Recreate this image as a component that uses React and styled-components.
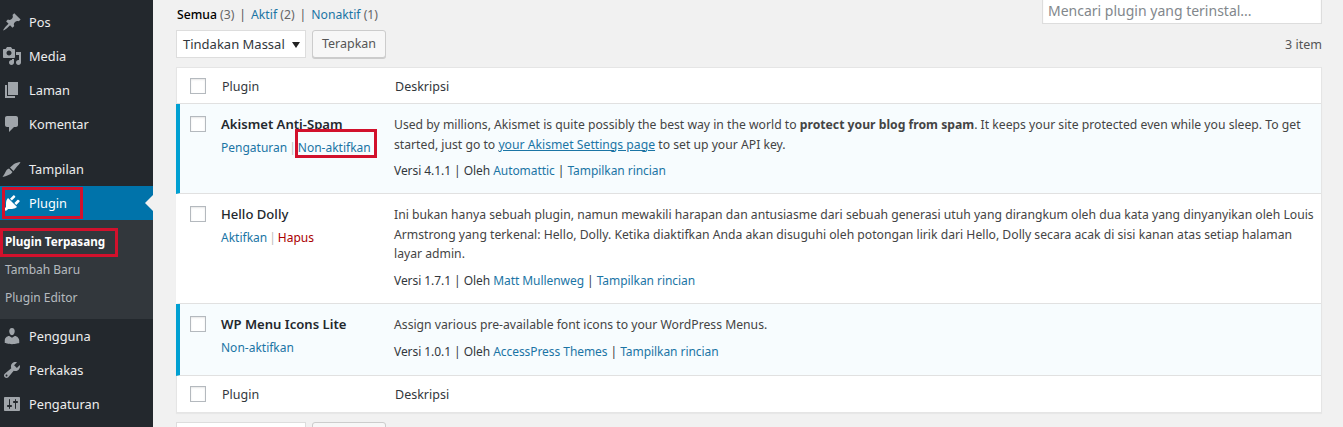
import styled, { createGlobalStyle } from "styled-components";

const icons = {
  pos: "M10.44 3.02l1.82-1.82 6.36 6.35-1.83 1.82c-1.05-.68-2.48-.57-3.41.36l-.75.75c-.92.93-1.04 2.35-.35 3.41l-1.83 1.82-2.41-2.41-2.8 2.79c-.42.42-3.38 2.71-3.8 2.29s1.86-3.39 2.28-3.81l2.79-2.79L4.1 9.36l1.83-1.82c1.05.69 2.48.57 3.4-.36l.75-.75c.93-.92 1.05-2.35.36-3.41z",
  media:
    "M13 11V4c0-.55-.45-1-1-1h-1.67L9 1H5L3.67 3H2c-.55 0-1 .45-1 1v7c0 .55.45 1 1 1h10c.55 0 1-.45 1-1zM7 4.5c1.38 0 2.5 1.12 2.5 2.5S8.38 9.5 7 9.5 4.5 8.38 4.5 7 5.62 4.5 7 4.5zM14 6h5v10.5c0 1.38-1.12 2.5-2.5 2.5S14 17.88 14 16.5s1.12-2.5 2.5-2.5c.17 0 .34.02.5.05V9h-3V6zm-4 8.05V13h2v3.5c0 1.38-1.12 2.5-2.5 2.5S7 17.88 7 16.5 8.12 14 9.5 14c.17 0 .34.02.5.05z",
  laman: "M6 15V2h10v13H6zm-1 1h8v2H3V5h2v11z",
  komentar:
    "M5 2h9c1.1 0 2 .9 2 2v7c0 1.1-.9 2-2 2h-2l-5 5v-5H5c-1.1 0-2-.9-2-2V4c0-1.1.9-2 2-2z",
  tampilan:
    "M.5 18C2 16 3 14 4 12c.5-1.2 1.5-2 3-2.5l3.5 3.5c-1 1.5-2.5 2.5-4 3-2 1-4 1.5-6 2zM8 8.5L12 5c2-1 4-1.7 6.5-2-1 2-2.5 3.5-3.7 4.8L11.500 12z",
  plugin:
    "M13.11 4.36L9.87 7.6 8 5.73l3.24-3.24c.35-.34 1.05-.2 1.56.32.52.51.66 1.21.31 1.55zm-8 1.77l.91-1.12 9.01 9.01-1.19.84c-.71.71-2.63 1.16-3.82 1.16H6.14L4.9 17.26c-.59.59-1.54.59-2.12 0-.59-.58-.59-1.53 0-2.12l1.24-1.24v-3.88c0-1.13.4-3.19 1.09-3.89zm7.26 3.97l3.24-3.24c.34-.35 1.04-.21 1.55.31.52.51.66 1.21.32 1.56l-3.24 3.24z",
  pengguna:
    "M10 9.25c-2.27 0-2.73-3.44-2.73-3.44C7 4.02 7.82 2 9.97 2c2.16 0 2.98 2.02 2.71 3.81 0 0-.41 3.44-2.68 3.44zm0 2.57L12.72 10c2.39 0 4.52 2.33 4.52 4.53v2.49s-3.65 1.13-7.24 1.13c-3.65 0-7.24-1.13-7.24-1.13v-2.49c0-2.25 1.94-4.48 4.47-4.48z",
  perkakas:
    "M16.68 9.77c-1.34 1.34-3.3 1.67-4.95.99l-5.41 6.52c-.99.99-2.59.99-3.58 0s-.99-2.59 0-3.57l6.52-5.42c-.68-1.65-.35-3.61.99-4.95 1.28-1.28 3.12-1.62 4.72-1.06l-2.89 2.89 2.82 2.82 2.86-2.87c.53 1.58.18 3.41-1.08 4.65zM3.81 16.21c.4.39 1.04.39 1.43 0 .4-.4.4-1.04 0-1.43-.39-.4-1.03-.4-1.43 0-.39.39-.39 1.03 0 1.43z",
  pengaturan:
    "M18 16V4c0-.55-.45-1-1-1H3c-.55 0-1 .45-1 1v12c0 .55.45 1 1 1h14c.55 0 1-.45 1-1zM8 11h1c.55 0 1 .45 1 1s-.45 1-1 1H8v1.5c0 .28-.22.5-.5.5s-.5-.22-.5-.5V13H6c-.55 0-1-.45-1-1s.45-1 1-1h1V5.5c0-.28.22-.5.5-.5s.5.22.5.5V11zm5-2h-1c-.55 0-1-.45-1-1s.45-1 1-1h1V5.5c0-.28.22-.5.5-.5s.5.22.5.5V7h1c.55 0 1 .45 1 1s-.45 1-1 1h-1v5.5c0 .28-.22.5-.5.5s-.5-.22-.5-.5V9z",
};

function MenuIcon({ name }) {
  return (
    <IconSvg viewBox="0 0 20 20">
      <path d={icons[name]} />
    </IconSvg>
  );
}

function MenuGroup({ items }) {
  return items.map(([name, label]) => (
    <MenuItem key={name}>
      <MenuIcon name={name} />
      {label}
    </MenuItem>
  ));
}

export default function App() {
  return (
    <Page>
      <GlobalStyle />
      <Sidebar>
        <MenuList>
          <MenuGroup
            items={[
              ["pos", "Pos"],
              ["media", "Media"],
              ["laman", "Laman"],
              ["komentar", "Komentar"],
            ]}
          />
        </MenuList>
        <MenuList $gap>
          <MenuGroup items={[["tampilan", "Tampilan"]]} />
          <CurrentItem>
            <MenuIcon name="plugin" />
            Plugin
            <RedBox $left={2} $top={1} $width={81} $height={32} />
          </CurrentItem>
        </MenuList>
        <Submenu>
          <SubItem $active>
            Plugin Terpasang
            <RedBox $left={0} $top={0} $width={118} $height={29} />
          </SubItem>
          <SubItem>Tambah Baru</SubItem>
          <SubItem>Plugin Editor</SubItem>
        </Submenu>
        <MenuList>
          <MenuGroup
            items={[
              ["pengguna", "Pengguna"],
              ["perkakas", "Perkakas"],
              ["pengaturan", "Pengaturan"],
            ]}
          />
        </MenuList>
      </Sidebar>

      <Main>
        <TopBar>
          <Filters>
            <strong>Semua</strong> <Count>(3)</Count>
            <Sep>|</Sep>
            <Link>Aktif</Link> <Count>(2)</Count>
            <Sep>|</Sep>
            <Link>Nonaktif</Link> <Count>(1)</Count>
          </Filters>
          <SearchBox placeholder="Mencari plugin yang terinstal..." />
        </TopBar>

        <Toolbar>
          <BulkSelect>
            Tindakan Massal
            <Caret />
          </BulkSelect>
          <ApplyButton>Terapkan</ApplyButton>
          <ItemCount>3 item</ItemCount>
        </Toolbar>

        <Table>
          <HeadRow>
            <CheckCell>
              <Checkbox />
            </CheckCell>
            <HeadName>Plugin</HeadName>
            <HeadDesc>Deskripsi</HeadDesc>
          </HeadRow>

          <Row $active $height={90}>
            <CheckCell>
              <Checkbox />
            </CheckCell>
            <NameCell>
              <PluginName>Akismet Anti-Spam</PluginName>
              <RowActions>
                <Link>Pengaturan</Link>
                <ThinSep>|</ThinSep>
                <BoxedLink>
                  Non-aktifkan
                  <RedBox $left={-3} $top={-10} $width={82} $height={29} />
                </BoxedLink>
              </RowActions>
            </NameCell>
            <DescCell>
              <p>
                Used by millions, Akismet is quite possibly the best way in the
                world to <strong>protect your blog from spam</strong>. It keeps
                your site protected even while you sleep. To get started, just
                go to <UnderLink>your Akismet Settings page</UnderLink> to set
                up your API key.
              </p>
              <Meta>
                Versi 4.1.1 | Oleh <Link>Automattic</Link> |{" "}
                <Link>Tampilkan rincian</Link>
              </Meta>
            </DescCell>
          </Row>

          <Row $height={110}>
            <CheckCell>
              <Checkbox />
            </CheckCell>
            <NameCell>
              <PluginName $light>Hello Dolly</PluginName>
              <RowActions>
                <Link>Aktifkan</Link>
                <ThinSep>|</ThinSep>
                <DangerLink>Hapus</DangerLink>
              </RowActions>
            </NameCell>
            <DescCell>
              <p>
                Ini bukan hanya sebuah plugin, namun mewakili harapan dan
                antusiasme dari sebuah generasi utuh yang dirangkum oleh dua
                kata yang dinyanyikan oleh Louis Armstrong yang terkenal: Hello,
                Dolly. Ketika diaktifkan Anda akan disuguhi oleh potongan lirik
                dari Hello, Dolly secara acak di sisi kanan atas setiap halaman
                layar admin.
              </p>
              <Meta>
                Versi 1.7.1 | Oleh <Link>Matt Mullenweg</Link> |{" "}
                <Link>Tampilkan rincian</Link>
              </Meta>
            </DescCell>
          </Row>

          <Row $active $height={72}>
            <CheckCell>
              <Checkbox />
            </CheckCell>
            <NameCell>
              <PluginName>WP Menu Icons Lite</PluginName>
              <RowActions>
                <Link>Non-aktifkan</Link>
              </RowActions>
            </NameCell>
            <DescCell>
              <p>Assign various pre-available font icons to your WordPress Menus.</p>
              <Meta>
                Versi 1.0.1 | Oleh <Link>AccessPress Themes</Link> |{" "}
                <Link>Tampilkan rincian</Link>
              </Meta>
            </DescCell>
          </Row>

          <FootRow>
            <CheckCell>
              <Checkbox />
            </CheckCell>
            <HeadName>Plugin</HeadName>
            <HeadDesc>Deskripsi</HeadDesc>
          </FootRow>
        </Table>

        <Toolbar>
          <BulkSelect />
          <ApplyButton />
        </Toolbar>
      </Main>
    </Page>
  );
}

const GlobalStyle = createGlobalStyle`
  html, body {
    margin: 0;
    height: 100%;
    overflow: hidden;
    background: #f1f1f1;
  }
  body {
    font-family: "Noto Sans", "Open Sans", sans-serif;
    font-size: 12.2px;
    color: #444;
  }
  * {
    box-sizing: border-box;
  }
`;

const Page = styled.div`
  display: flex;
  width: 1343px;
  height: 427px;
  overflow: hidden;
`;

const Sidebar = styled.aside`
  width: 153px;
  flex-shrink: 0;
  padding-top: 5px;
  background: #23282d;
`;

const MenuList = styled.div`
  margin-top: ${(props) => (props.$gap ? "11px" : "0")};
`;

const MenuItem = styled.div`
  position: relative;
  display: flex;
  align-items: center;
  height: 34px;
  padding-left: 2px;
  gap: 7px;
  color: #eee;
  font-size: 12.8px;
  svg {
    fill: #a0a5aa;
  }
`;

const CurrentItem = styled(MenuItem)`
  background: #0073aa;
  color: #fff;
  svg {
    fill: #fff;
  }
  &::after {
    content: "";
    position: absolute;
    right: 0;
    top: 9px;
    border: 8px solid transparent;
    border-left: 0;
    border-right-color: #f1f1f1;
  }
`;

const IconSvg = styled.svg`
  width: 20px;
  height: 20px;
  flex-shrink: 0;
`;

const Submenu = styled.div`
  height: 99px;
  padding-top: 8px;
  background: #32373c;
`;

const SubItem = styled.div`
  position: relative;
  height: 28px;
  line-height: 27px;
  padding-left: 5px;
  font-size: ${(props) => (props.$active ? "11.7px" : "12px")};
  color: ${(props) => (props.$active ? "#fff" : "rgba(240, 245, 250, 0.7)")};
  font-weight: ${(props) => (props.$active ? 700 : 400)};
`;

const RedBox = styled.span`
  position: absolute;
  left: ${(props) => props.$left}px;
  top: ${(props) => props.$top}px;
  width: ${(props) => props.$width}px;
  height: ${(props) => props.$height}px;
  border: 3px solid #d2112c;
  pointer-events: none;
`;

const Main = styled.main`
  flex: 1;
  min-width: 0;
  padding: 0 21px 0 23px;
`;

const TopBar = styled.div`
  display: flex;
  justify-content: space-between;
  height: 30px;
`;

const Filters = styled.div`
  padding-top: 6px;
  padding-left: 1px;
  line-height: 18px;
  color: #555;
  strong {
    font-weight: 500;
    color: #000;
  }
`;

const Count = styled.span`
  color: #666;
`;

const Sep = styled.span`
  margin: 0 5px;
  color: #555;
`;

const Link = styled.a`
  color: #1b75a5;
`;

const UnderLink = styled(Link)`
  text-decoration: underline;
`;

const DangerLink = styled.a`
  color: #a00;
`;

const SearchBox = styled.input`
  width: 280px;
  height: 28px;
  margin-top: -4px;
  padding: 0 5px;
  border: 1px solid #ddd;
  background: #fff;
  font: 14px "Noto Sans", sans-serif;
  box-shadow: inset 0 1px 2px rgba(0, 0, 0, 0.07);
  &::placeholder {
    color: #82878c;
    opacity: 1;
  }
`;

const Toolbar = styled.div`
  display: flex;
  align-items: center;
  gap: 6px;
  height: 28px;
`;

const BulkSelect = styled.div`
  position: relative;
  width: 130px;
  height: 28px;
  padding-left: 6px;
  line-height: 26px;
  border: 1px solid #ddd;
  background: #fff;
  color: #32373c;
  font-size: 13px;
  flex-shrink: 0;
`;

const Caret = styled.span`
  position: absolute;
  right: 5px;
  top: 11px;
  border: 4px solid transparent;
  border-bottom: 0;
  border-top: 6px solid #222;
`;

const ApplyButton = styled.div`
  width: 74px;
  height: 28px;
  line-height: 25px;
  text-align: center;
  border: 1px solid #ccc;
  border-radius: 3px;
  background: #f7f7f7;
  box-shadow: 0 1px 0 #ccc;
  color: #555;
  font-size: 12.5px;
`;

const ItemCount = styled.div`
  margin-left: auto;
  color: #555;
  font-size: 12.5px;
`;

const Table = styled.div`
  margin: 9px 0;
  border: 1px solid #e5e5e5;
  background: #fff;
  box-shadow: 0 1px 1px rgba(0, 0, 0, 0.04);
`;

const HeadRow = styled.div`
  display: flex;
  height: 36px;
  align-items: center;
  border-bottom: 1px solid #e1e1e1;
`;

const FootRow = styled(HeadRow)`
  border-bottom: 0;
`;

const Row = styled.div`
  display: flex;
  height: ${(props) => props.$height}px;
  padding-top: 12px;
  border-bottom: 1px solid #e1e1e1;
  border-left: 4px solid ${(props) => (props.$active ? "#00a0d2" : "transparent")};
  margin-left: -1px;
  background: ${(props) => (props.$active ? "#f7fcfe" : "#fff")};
`;

const CheckCell = styled.div`
  width: 41px;
  padding-left: 10px;
  flex-shrink: 0;
  ${HeadRow} & {
    padding-left: 13px;
    width: 45px;
  }
`;

const Checkbox = styled.span`
  display: block;
  width: 16px;
  height: 16px;
  border: 1px solid #b4b9be;
  background: #fff;
  box-shadow: inset 0 1px 2px rgba(0, 0, 0, 0.1);
`;

const HeadName = styled.div`
  width: 173px;
  font-size: 12.5px;
  color: #32373c;
  padding-top: 1px;
`;

const HeadDesc = styled(HeadName)`
  width: auto;
`;

const NameCell = styled.div`
  width: 173px;
  flex-shrink: 0;
`;

const PluginName = styled.div`
  margin-top: -1px;
  line-height: 18px;
  font-weight: ${(props) => (props.$light ? 500 : 600)};
  color: #23282d;
  font-size: 13.1px;
`;

const RowActions = styled.div`
  margin-top: 6px;
  line-height: 18px;
  font-size: 12px;
`;

const ThinSep = styled.span`
  margin: 0 2px;
  color: #bbb;
`;

const BoxedLink = styled(Link)`
  position: relative;
`;

const DescCell = styled.div`
  flex: 1;
  margin-top: -1px;
  padding-right: 4px;
  line-height: 19.5px;
  p {
    margin: 0;
    color: #444;
  }
  strong {
    font-weight: 700;
  }
`;

const Meta = styled.div`
  margin-top: 7px;
  color: #32373c;
  font-size: 12px;
  letter-spacing: -0.06px;
`;
